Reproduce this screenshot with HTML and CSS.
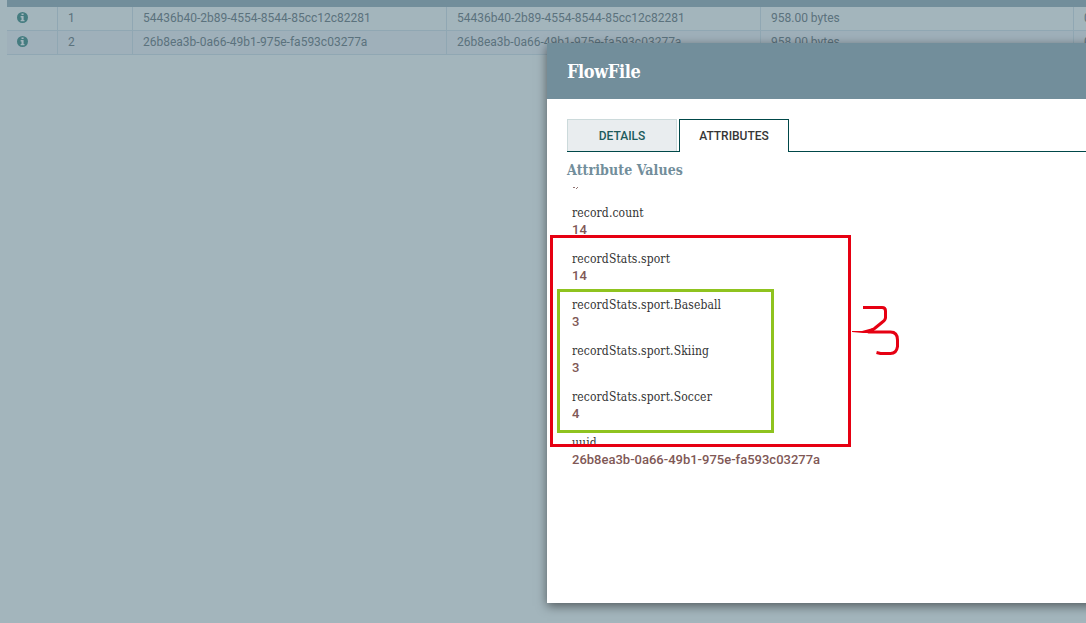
FILE: index.html
```html
<!DOCTYPE html>
<html lang="en">
<head>
<meta charset="utf-8">
<title>FlowFile</title>
<link rel="stylesheet" href="styles.css">
</head>
<body>
<svg class="symbols" width="0" height="0">
  <symbol id="info" viewBox="0 0 10 10">
    <circle cx="5" cy="5" r="5" fill="#457c80"/>
    <path d="M4.1 1.3h1.9v1.5H4.1zM3.3 3.7h2.7v3.6h.8v1.2H3.3V7.3h.8V4.9h-.8z" fill="#a3b6bd"/>
  </symbol>
</svg>
<main class="listing">
  <div class="listing-header"></div>
  <div class="row">
    <div class="cell cell-icon"><svg class="info"><use href="#info"/></svg></div>
    <div class="cell">1</div>
    <div class="cell">54436b40-2b89-4554-8544-85cc12c82281</div>
    <div class="cell">54436b40-2b89-4554-8544-85cc12c82281</div>
    <div class="cell">958.00 bytes</div>
    <div class="cell cell-last">0</div>
  </div>
  <div class="row row-odd">
    <div class="cell cell-icon"><svg class="info"><use href="#info"/></svg></div>
    <div class="cell">2</div>
    <div class="cell">26b8ea3b-0a66-49b1-975e-fa593c03277a</div>
    <div class="cell">26b8ea3b-0a66-49b1-975e-fa593c03277a</div>
    <div class="cell">958.00 bytes</div>
    <div class="cell cell-last">0</div>
  </div>
</main>
<section class="dialog">
  <header class="dialog-header"><h1 class="dialog-title">FlowFile</h1></header>
  <div class="dialog-body">
    <nav class="tabs">
      <div class="tab">DETAILS</div>
      <div class="tab tab-selected">ATTRIBUTES</div>
    </nav>
    <h2 class="section-title">Attribute Values</h2>
    <div class="attributes">
      <svg class="clipped-value" width="8" height="2"><path d="M1 .5h2M5 .5h1M4 1.5h1" stroke="#775351" opacity=".8"/></svg>
      <dl class="attribute"><dt><span class="name">record.count</span></dt><dd>14</dd></dl>
      <dl class="attribute"><dt><span class="name">recordStats.sport</span></dt><dd>14</dd></dl>
      <dl class="attribute"><dt><span class="name">recordStats.sport.Baseball</span></dt><dd>3</dd></dl>
      <dl class="attribute"><dt><span class="name">recordStats.sport.Skiing</span></dt><dd>3</dd></dl>
      <dl class="attribute"><dt><span class="name">recordStats.sport.Soccer</span></dt><dd>4</dd></dl>
      <dl class="attribute"><dt><span class="name">uuid</span></dt><dd>26b8ea3b-0a66-49b1-975e-fa593c03277a</dd></dl>
    </div>
  </div>
</section>
<div class="mark mark-red"></div>
<div class="mark mark-green"></div>
<svg class="scribble" viewBox="850 300 54 60" width="54" height="60" fill="none" stroke="#e60012" stroke-width="3" stroke-linejoin="round">
  <path d="M863 307.500h19q3.500 0 3.500 3.500v6.500q0 2.500-3 4.500l-8 6.500-6 3.500h22q7 0 7 8v6.500q-1 7-7 7h-10l-4-1"/>
  <path d="M852 331h10l11-3v5h-10l-11-1z" fill="#e60012" stroke="none"/>
</svg>
</body>
</html>
```

FILE: styles.css
```css
* { box-sizing: border-box; }
body {
  margin: 0;
  width: 1086px;
  height: 623px;
  overflow: hidden;
  position: relative;
  background: #a3b5bc;
  font-family: Roboto, "Liberation Sans", sans-serif;
}
.symbols { position: absolute; }
.listing { padding-left: 7px; overflow: hidden; }
.listing-header { height: 7px; background: #728e9b; }
.row {
  display: grid;
  grid-template-columns: 51px 75px 314px 314px 313px 12px;
  height: 24px;
  border-bottom: 1px solid #90a7b3;
}
.row-odd { background: #9fb0ba; }
.cell {
  padding-left: 10px;
  border-right: 1px solid #90a7b3;
  font-size: 12px;
  line-height: 22px;
  color: #5b727d;
  white-space: nowrap;
  overflow: hidden;
}
.cell-icon { padding: 5px 0 0 10px; line-height: 0; }
.cell-last { border-right: 0; }
.info { width: 11px; height: 11px; }
.dialog {
  position: absolute;
  left: 547px;
  top: 43px;
  width: 570px;
  height: 560px;
  background: #fff;
  box-shadow: 0 3px 10px rgba(0, 0, 0, .5);
}
.dialog-header {
  height: 56px;
  padding-left: 20px;
  background: #728e9b;
  display: flex;
  align-items: center;
}
.dialog-title, .section-title, .name {
  font-family: "DejaVu Serif Condensed", "DejaVu Serif", serif;
  font-stretch: condensed;
  white-space: nowrap;
}
.dialog-title {
  margin: 0;
  font-size: 18px;
  letter-spacing: -.4px;
  color: #fff;
}
.dialog-body { padding: 20px 0 20px 20px; }
.tabs {
  display: flex;
  gap: 2px;
  height: 33px;
  border-bottom: 1px solid #004849;
}
.tab {
  width: 110px;
  height: 32px;
  border: 1px solid #ccdadb;
  border-bottom: 0;
  background: #e9edef;
  color: #1c5b5c;
  font-size: 12px;
  font-weight: 500;
  line-height: 32px;
  text-align: center;
}
.tab-selected {
  height: 33px;
  border-color: #004849;
  background: #fff;
  color: #363636;
}
.section-title {
  margin: 8px 0 0;
  height: 20px;
  font-size: 14px;
  line-height: 20px;
  letter-spacing: .1px;
  color: #728e9b;
}
.attributes { padding: 7px 5px 0; }
.clipped-value { display: block; margin-bottom: 15px; }
.attribute { margin: 0 0 12px; height: 34px; }
.attribute dt { height: 18px; line-height: 16px; }
.name {
  font-size: 12px;
  letter-spacing: .12px;
  color: #333;
}
.attribute dd {
  margin: 0;
  font-size: 13px;
  font-weight: 500;
  line-height: 16px;
  color: #805856;
}
.mark { position: absolute; border: 3px solid; }
.mark-red { left: 550px; top: 235px; width: 301px; height: 212px; border-color: #e60012; }
.mark-green { left: 557px; top: 289px; width: 217px; height: 144px; border-color: #8fc31f; }
.scribble { position: absolute; left: 850px; top: 300px; }
```
